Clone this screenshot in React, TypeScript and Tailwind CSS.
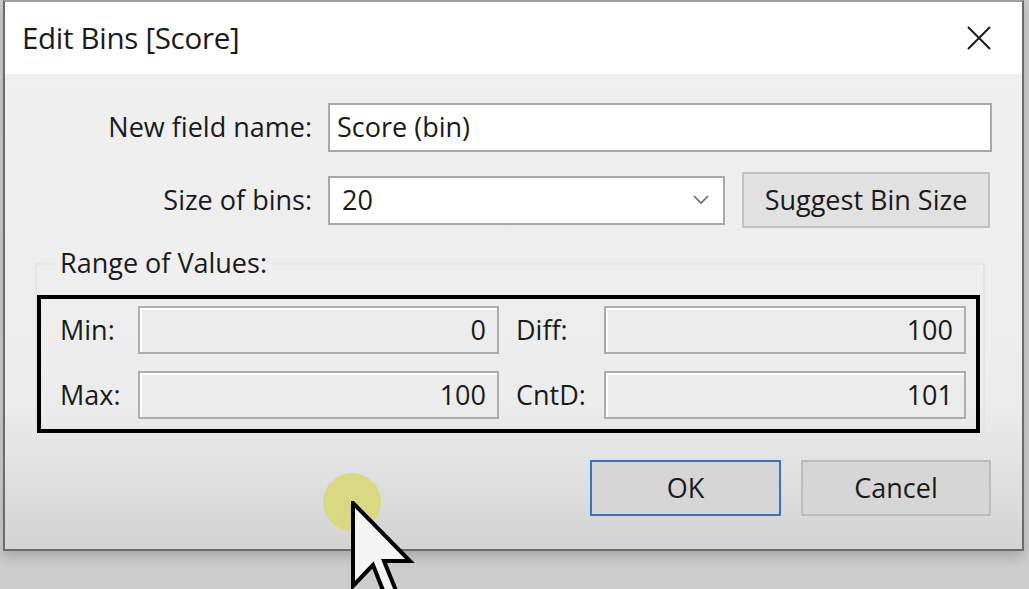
import React from 'react';

const font = { fontFamily: '"Open Sans", "Noto Sans", sans-serif' };

const ValueField: React.FC<{ value: string; w: string }> = ({ value, w }) => (
  <div
    className={`${w} h-[48px] border-2 border-[#adadad] bg-[#ececec] shadow-[inset_2px_2px_0_#ffffff] flex items-center justify-end pr-[11px] text-[#1a1a1a]`}
  >
    {value}
  </div>
);

const Cursor: React.FC = () => (
  <div className="absolute left-[323px] top-[473px] pointer-events-none">
    <div className="w-[58px] h-[58px] rounded-full bg-[#d8d86a]/80" />
    <svg className="absolute left-[28px] top-[28px]" width="64" height="110" viewBox="0 0 64 110">
      <polygon
        points="2,2 2,85 22,64 37,102 48,97 33,60 59,60"
        fill="#f4f4f4"
        stroke="#000"
        strokeWidth="4"
        strokeLinejoin="miter"
      />
    </svg>
  </div>
);

export default function App() {
  return (
    <div className="relative w-[1029px] h-[589px] overflow-hidden bg-[#cdcdcd]" style={font}>
      <div className="ml-[3px] w-[1021px] h-[551px] border-2 border-[#6b6b6b] border-t-[#a0a0a0] shadow-[0_6px_12px_rgba(0,0,0,0.18)] flex flex-col">
        {/* title bar */}
        <div className="h-[72px] bg-white flex items-center justify-between pl-[17px] pr-[30px] shrink-0">
          <span className="text-[29.5px] text-[#1a1a1a] tracking-[-0.3px]">Edit Bins [Score]</span>
          <svg width="26" height="26" viewBox="0 0 26 26">
            <path d="M2 2 L24 24 M24 2 L2 24" stroke="#1a1a1a" strokeWidth="2" />
          </svg>
        </div>

        {/* body */}
        <div className="flex-1 bg-gradient-to-b from-[#f0f0f0] via-[#ececec] via-70% to-[#d3d3d3] pt-[29px] text-[27px] text-[#1a1a1a]">
          <div className="flex items-center h-[49px]">
            <span className="w-[307px] text-right">New field name:</span>
            <div className="ml-[16px] w-[664px] h-[49px] bg-white border-2 border-[#a8a8a8] flex items-center pl-[7px]">
              Score (bin)
            </div>
          </div>

          <div className="flex items-center h-[56px] mt-[20px]">
            <span className="w-[307px] text-right">Size of bins:</span>
            <div className="ml-[16px] w-[397px] h-[49px] bg-white border-2 border-[#a8a8a8] flex items-center justify-between pl-[12px] pr-[14px]">
              <span>20</span>
              <svg width="16" height="10" viewBox="0 0 16 10">
                <path d="M1 1 L8 8 L15 1" fill="none" stroke="#6a6a6a" strokeWidth="1.6" />
              </svg>
            </div>
            <div className="ml-[17px] w-[248px] h-[56px] bg-[#e1e1e1] border-2 border-[#c2c2c2] flex items-center justify-center">
              Suggest Bin Size
            </div>
          </div>

          {/* range group */}
          <div className="relative ml-[30px] mt-[35px] w-[950px] h-[181px] border-2 border-[#e4e4e4] pt-[30px]">
            <span className="absolute left-[18px] -top-[21px] px-[5px] bg-[#efefef] leading-[38px]">
              Range of Values:
            </span>
            <div className="w-[943px] h-[138px] border-[4px] border-black pt-[7px] pl-[19px]">
              <div className="grid grid-cols-[78px_361px_17px_88px_362px] gap-y-[17px] items-center">
                <span>Min:</span>
                <ValueField value="0" w="w-[361px]" />
                <span />
                <span>Diff:</span>
                <ValueField value="100" w="w-[362px]" />
                <span>Max:</span>
                <ValueField value="100" w="w-[361px]" />
                <span />
                <span>CntD:</span>
                <ValueField value="101" w="w-[362px]" />
              </div>
            </div>
          </div>

          {/* buttons */}
          <div className="flex justify-end gap-[20px] mt-[16px] pr-[31px]">
            <div className="w-[191px] h-[56px] bg-[#d6d6d6] border-2 border-[#3a73b6] flex items-center justify-center">
              OK
            </div>
            <div className="w-[190px] h-[56px] bg-[#d6d6d6] border-2 border-[#bcbcbc] flex items-center justify-center">
              Cancel
            </div>
          </div>
        </div>
      </div>
      <Cursor />
    </div>
  );
}
